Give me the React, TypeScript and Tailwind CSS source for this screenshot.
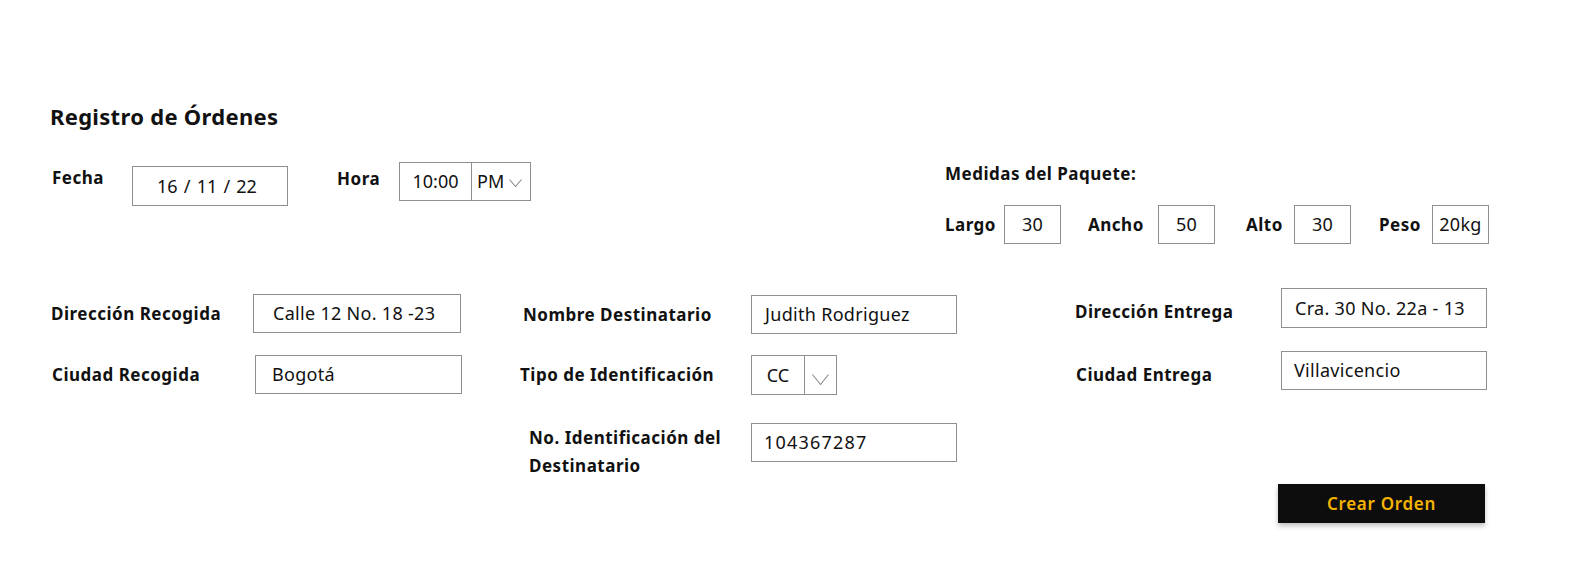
import React from "react";

const Chevron = ({ w, h }: { w: number; h: number }) => (
  <svg width={w} height={h} viewBox={`0 0 ${w} ${h}`} fill="none">
    <path
      d={`M0.5 0.5 L${w / 2} ${h - 0.5} L${w - 0.5} 0.5`}
      stroke="#8a8a8a"
      strokeWidth="1.1"
    />
  </svg>
);

const Field = ({
  label,
  value,
  labelW,
  boxW,
  boxH = 39,
  pad = 13,
  className = "",
}: {
  label: React.ReactNode;
  value: string;
  labelW: number;
  boxW: number;
  boxH?: number;
  pad?: number;
  className?: string;
}) => (
  <div className={`flex items-center ${className}`}>
    <div
      className="text-[17px] font-bold leading-[28px] tracking-[0.5px] text-[#111]"
      style={{ width: labelW }}
    >
      {label}
    </div>
    <div
      className="flex items-center border border-[#8f8f8f] text-[18px] tracking-[0.3px] text-[#111]"
      style={{ width: boxW, height: boxH, paddingLeft: pad }}
    >
      {value}
    </div>
  </div>
);

const Size = ({ label, value, labelW, ml }: { label: string; value: string; labelW: number; ml: string }) => (
  <div className={`flex items-center ${ml}`}>
    <span className="text-[17px] font-bold tracking-[0.5px] text-[#111]" style={{ width: labelW }}>
      {label}
    </span>
    <div className="flex h-[39px] w-[57px] items-center justify-center border border-[#8f8f8f] text-[18px] tracking-[0.3px] text-[#111]">
      {value}
    </div>
  </div>
);

export default function App() {
  return (
    <div className="h-[572px] w-full bg-white font-['Noto_Sans',sans-serif] text-[#111]">
      <div className="pl-[50px] pt-[101px]">
        <h1 className="text-[22px] font-bold leading-[30px] tracking-[0.3px]">Registro de Órdenes</h1>
      </div>

      <div className="flex h-[130px]">
        {/* fecha y hora */}
        <div className="ml-[52px] flex items-start">
          <span className="mt-[34px] w-[80px] text-[17px] font-bold leading-[26px] tracking-[0.5px]">Fecha</span>
          <div className="mt-[35px] flex h-[40px] w-[156px] items-center border border-[#8f8f8f] pl-[24px] text-[18px] [word-spacing:1.5px]">
            16 / 11 / 22
          </div>
          <span className="ml-[49px] mt-[35px] w-[62px] text-[17px] font-bold leading-[26px] tracking-[0.5px]">Hora</span>
          <div className="mt-[31px] flex h-[39px] w-[132px] border border-[#8f8f8f] text-[18px]">
            <div className="flex w-[72px] items-center justify-center border-r border-[#8f8f8f]">10:00</div>
            <div className="flex flex-1 items-center pl-[5px]">
              PM
              <span className="ml-[5px] mt-[2px]">
                <Chevron w={13} h={8} />
              </span>
            </div>
          </div>
        </div>

        {/* medidas */}
        <div className="ml-[414px] flex flex-col">
          <span className="mt-[31px] text-[17px] font-bold leading-[24px] tracking-[0.5px]">Medidas del Paquete:</span>
          <div className="mt-[19px] flex">
            <Size label="Largo" value="30" labelW={59} ml="" />
            <Size label="Ancho" value="50" labelW={70} ml="ml-[27px]" />
            <Size label="Alto" value="30" labelW={48} ml="ml-[31px]" />
            <Size label="Peso" value="20kg" labelW={53} ml="ml-[28px]" />
          </div>
        </div>
      </div>

      <div className="flex">
        {/* recogida */}
        <div className="ml-[51px] flex w-[469px] flex-col pt-[33px]">
          <Field label="Dirección Recogida" value="Calle 12 No. 18 -23" labelW={202} boxW={208} pad={19} />
          <Field
            label="Ciudad Recogida"
            value="Bogotá"
            labelW={203}
            boxW={207}
            pad={16}
            className="ml-[1px] mt-[22px]"
          />
        </div>

        {/* destinatario */}
        <div className="flex w-[550px] flex-col pt-[34px]">
          <Field label={<span className="ml-[3px]">Nombre Destinatario</span>} value="Judith Rodriguez" labelW={231} boxW={206} />
          <div className="mt-[21px] flex items-center">
            <span className="w-[231px] text-[17px] font-bold leading-[28px] tracking-[0.5px]">Tipo de Identificación</span>
            <div className="flex h-[40px] w-[86px] border border-[#8f8f8f] text-[18px]">
              <div className="flex w-[53px] items-center justify-center border-r border-[#8f8f8f]">CC</div>
              <div className="flex flex-1 items-center justify-center pt-[8px]">
                <Chevron w={17} h={11} />
              </div>
            </div>
          </div>
          <div className="mt-[28px] flex items-start">
            <span className="ml-[9px] mt-[1px] w-[222px] text-[17px] font-bold leading-[28px] tracking-[0.5px]">
              No. Identificación del
              <br />
              Destinatario
            </span>
            <div className="flex h-[39px] w-[206px] items-center border border-[#8f8f8f] px-[12px] text-[18px] tracking-[1.2px]">
              104367287
            </div>
          </div>
        </div>

        {/* entrega */}
        <div className="flex flex-col pt-[27px]">
          <Field
            label={<span className="ml-[5px] mt-[8px] inline-block">Dirección Entrega</span>}
            value="Cra. 30 No. 22a - 13"
            labelW={211}
            boxW={206}
            boxH={40}
          />
          <Field
            label={<span className="ml-[6px] mt-[8px] inline-block">Ciudad Entrega</span>}
            value="Villavicencio"
            labelW={211}
            boxW={206}
            pad={12}
            className="mt-[23px]"
          />
          <button className="ml-[208px] mt-[94px] h-[39px] w-[207px] bg-[#0d0d0d] text-[17px] font-semibold tracking-[0.7px] text-[#f5b400] shadow-[0_3px_5px_rgba(0,0,0,0.25)]">
            Crear Orden
          </button>
        </div>
      </div>
    </div>
  );
}
